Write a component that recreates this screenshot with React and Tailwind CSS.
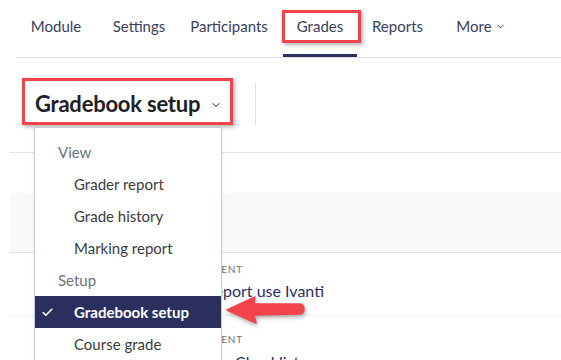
import { Check, ChevronDown } from "lucide-react";

const navItems = [
  { label: "Module", w: "w-[80px]" },
  { label: "Settings", w: "w-[86px]" },
  { label: "Participants", w: "w-[94px]" },
];

const menu = [
  { label: "View", head: true },
  { label: "Grader report" },
  { label: "Grade history" },
  { label: "Marking report" },
  { label: "Setup", head: true },
  { label: "Gradebook setup", active: true },
  { label: "Course grade" },
];

export default function App() {
  return (
    <div
      className="relative w-[561px] h-[360px] overflow-hidden bg-white"
      style={{ fontFamily: "Lato, 'Open Sans', sans-serif" }}
    >
      {/* secondary navigation */}
      <div className="ml-[16px] h-[58px] border-b border-[#dee2e6] flex items-stretch">
        {navItems.map((it) => (
          <div
            key={it.label}
            className={`${it.w} flex items-center justify-center text-[15px] text-[#3a3e5c] pb-[4px]`}
          >
            {it.label}
          </div>
        ))}
        <div className="w-[7px]" />
        <div className="w-[74px] flex flex-col">
          <div className="flex-1 flex items-center justify-center text-[15px] text-[#3a3e5c] pb-[1px]">
            Grades
          </div>
          <div className="h-[3px] bg-[#2b2f5e]" />
        </div>
        <div className="w-[81px] flex items-center justify-center text-[15px] text-[#3a3e5c] pb-[4px]">
          Reports
        </div>
        <div className="w-[86px] flex items-center justify-center gap-[3px] text-[15px] text-[#3a3e5c] pb-[4px]">
          More
          <ChevronDown size={11} strokeWidth={2} />
        </div>
      </div>

      {/* highlight around Grades */}
      <div className="absolute left-[282px] top-[10px] w-[79px] h-[33px] border-[3px] border-[#f2444a] shadow-[2px_2px_4px_rgba(0,0,0,0.3)]" />

      {/* page header */}
      <div className="ml-[10px] h-[95px] border-b border-[#dee2e6] flex items-center">
        <div className="ml-[25px] flex items-center gap-[10px] pb-[4px]">
          <span className="text-[22px] font-bold text-[#1d2125] tracking-[-0.01em]">Gradebook setup</span>
          <ChevronDown size={12} strokeWidth={2} className="text-[#1d2125] mt-[4px]" />
        </div>
        <div className="ml-[33px] w-px h-[42px] bg-[#dee2e6] mb-[2px]" />
      </div>

      {/* content behind menu */}
      <div className="ml-[10px] mt-[40px] h-[60px] bg-[#f8f9fa] border-b border-[#dee2e6]" />
      <div className="ml-[10px] h-[64px] border-b-[3px] border-[#f8f9fa] pt-[9px]">
        <div className="pl-[161px] text-[10px] tracking-[0.08em] text-[#6a737b]">ASSIGNMENT</div>
        <div className="pl-[195px] mt-[2px] text-[16px] text-[#2a3060]">Report use Ivanti</div>
      </div>
      <div className="ml-[10px] pt-[15px]">
        <div className="pl-[161px] text-[10px] tracking-[0.08em] text-[#6a737b]">ASSIGNMENT</div>
        <div className="pl-[178px] mt-[3px] text-[16px] text-[#2a3060]">Intake Checklist</div>
      </div>

      {/* highlight around page title */}
      <div className="absolute left-[22px] top-[78px] w-[211px] h-[47px] border-[3px] border-[#f2444a] shadow-[2px_2px_4px_rgba(0,0,0,0.3)]" />

      {/* dropdown menu */}
      <div className="absolute left-[34px] top-[127px] w-[188px] bg-white border border-[#c9cdd1] shadow-[0_2px_4px_rgba(0,0,0,0.08)] pt-[8px] pb-[8px]">
        {menu.map((m) => (
          <div
            key={m.label}
            className={`h-[32px] flex items-center text-[15px] ${
              m.active
                ? "bg-[#2b2f5e] text-white font-bold"
                : m.head
                ? "text-[#6a737b]"
                : "text-[#3a3d40]"
            } ${m.head ? "pl-[23px]" : "pl-[39px]"} relative`}
          >
            {m.active && (
              <Check size={13} strokeWidth={3} className="absolute left-[6px] top-[10px]" />
            )}
            {m.label}
          </div>
        ))}
      </div>

      {/* arrow pointing to current item */}
      <svg
        className="absolute left-0 top-0 drop-shadow-[1px_2px_2px_rgba(0,0,0,0.35)]"
        width="561"
        height="360"
        viewBox="0 0 561 360"
      >
        <path
          d="M227 310 L255 297 L254 304 L299 304 Q304 304 304 309 Q304 314 299 314 L254 315 L256 323 Z"
          fill="#f2444a"
          strokeLinejoin="round"
          stroke="#f2444a"
          strokeWidth="1.5"
        />
      </svg>
    </div>
  );
}
